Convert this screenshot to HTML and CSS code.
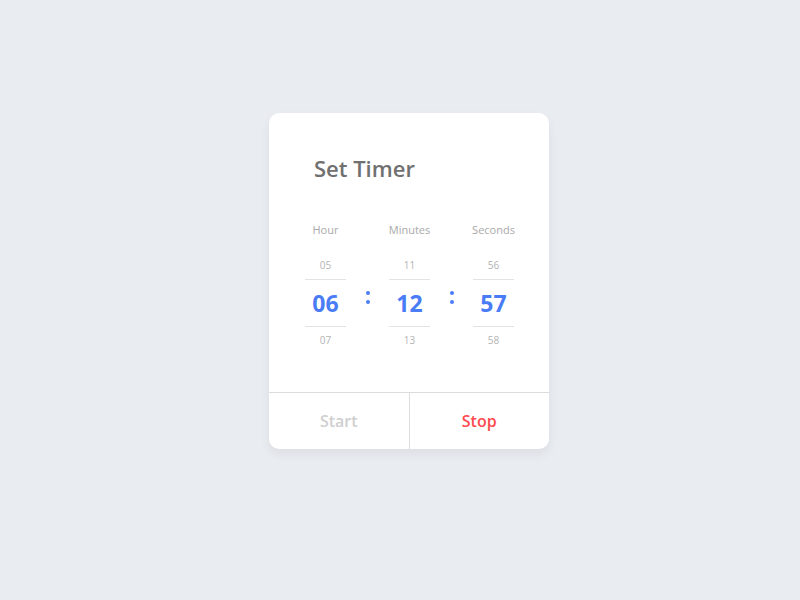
FILE: index.html
```html
<!DOCTYPE html>
<html>
<head>
<meta charset="utf-8">
<link rel="stylesheet" href="styles.css">
</head>
<body>
<div class="card">
  <div class="body">
    <h1 class="title">Set Timer</h1>
    <div class="pickers">
      <div class="col">
        <div class="label">Hour</div>
        <div class="small top">05</div>
        <div class="big">06</div>
        <div class="small bottom">07</div>
      </div>
      <div class="colon"><span class="dot"></span><span class="dot"></span></div>
      <div class="col">
        <div class="label">Minutes</div>
        <div class="small top">11</div>
        <div class="big">12</div>
        <div class="small bottom">13</div>
      </div>
      <div class="colon"><span class="dot"></span><span class="dot"></span></div>
      <div class="col">
        <div class="label">Seconds</div>
        <div class="small top">56</div>
        <div class="big">57</div>
        <div class="small bottom">58</div>
      </div>
    </div>
  </div>
  <div class="footer">
    <div class="btn start">Start</div>
    <div class="btn stop">Stop</div>
  </div>
</div>
</body>
</html>
```
FILE: styles.css
```css
html, body {
  margin: 0;
  padding: 0;
}
body {
  background: #e9ecf0;
  font-family: "Open Sans", "Noto Sans", sans-serif;
  width: 800px;
  height: 600px;
  display: flex;
  align-items: flex-start;
}
.card {
  margin-top: 113px;
  margin-left: 269px;
  width: 280px;
  background: #fff;
  border-radius: 10px;
  box-shadow: 0 5px 10px rgba(60, 70, 90, 0.08);
  overflow: hidden;
}
.body {
  padding-top: 40px;
  padding-bottom: 45px;
}
.title {
  margin: 0 0 39px 45px;
  font-size: 22px;
  line-height: 30px;
  font-weight: 600;
  color: #707070;
}
.pickers {
  display: flex;
  padding: 0 0 0 36px;
}
.col {
  width: 41px;
  display: flex;
  flex-direction: column;
  align-items: center;
}
.label {
  font-size: 11px;
  line-height: 16px;
  color: #a9a9a9;
  white-space: nowrap;
  margin-bottom: 20px;
}
.small {
  font-size: 10px;
  line-height: 14px;
  color: #b3b3b3;
  width: 100%;
  text-align: center;
}
.small.top {
  padding-bottom: 7px;
  border-bottom: 1px solid #e3e3e3;
}
.small.bottom {
  padding-top: 6px;
  border-top: 1px solid #e3e3e3;
}
.big {
  height: 46px;
  line-height: 46px;
  font-size: 23px;
  font-weight: 700;
  color: #4a7cf6;
  text-align: center;
}
.colon {
  width: 43px;
  display: flex;
  flex-direction: column;
  align-items: center;
  gap: 5px;
  padding-top: 69px;
}
.dot {
  width: 4px;
  height: 4px;
  border-radius: 50%;
  background: #4a7cf6;
}
.footer {
  display: flex;
  border-top: 1px solid #dcdcdc;
  height: 56px;
}
.btn {
  flex: 1;
  display: flex;
  align-items: center;
  justify-content: center;
  font-size: 16px;
  font-weight: 600;
}
.start {
  color: #cfcfcf;
  border-right: 1px solid #dcdcdc;
}
.stop {
  color: #fd4a4f;
}
```
